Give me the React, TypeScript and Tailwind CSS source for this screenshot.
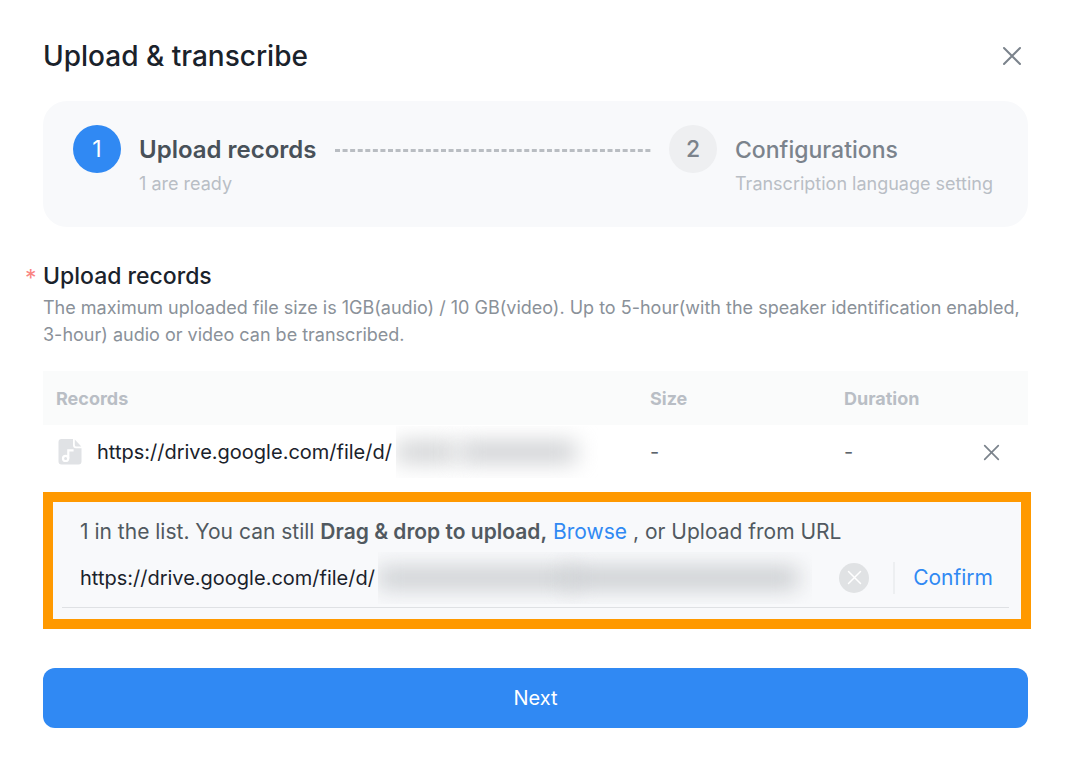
import React, { useState } from 'react';

interface CrossIconProps {
  className: string;
  strokeWidth: number;
}

const CrossIcon: React.FC<CrossIconProps> = ({ className, strokeWidth }) => (
  <svg
    viewBox="0 0 20 20"
    fill="none"
    stroke="currentColor"
    strokeWidth={strokeWidth}
    strokeLinecap="round"
    className={className}
    aria-hidden="true"
  >
    <path d="M2 2l16 16M18 2L2 18" />
  </svg>
);

const AudioFileIcon: React.FC = () => (
  <svg viewBox="0 0 24 26" className="h-[26px] w-6 shrink-0" aria-hidden="true">
    <path
      d="M3.5 0H15V6.2A3 3 0 0 0 18 9.2H23.5V22.5A3 3 0 0 1 20.5 25.5H3.5A3 3 0 0 1 .5 22.5V3A3 3 0 0 1 3.5 0Z"
      fill="#e0e2e5"
    />
    <path d="M16.8 .6L23.3 7.4H18.3A1.5 1.5 0 0 1 16.8 5.9Z" fill="#e0e2e5" />
    <circle cx="7.6" cy="19.4" r="2.6" fill="none" stroke="white" strokeWidth="2.2" />
    <path d="M10.3 19.4V11.3H15.6" fill="none" stroke="white" strokeWidth="2.2" />
  </svg>
);

interface StepProps {
  number: number;
  title: string;
  note: string;
  active?: boolean;
}

const Step: React.FC<StepProps> = ({ number, title, note, active }) => (
  <div className="flex gap-[18px]">
    <div
      className={`flex size-12 shrink-0 items-center justify-center rounded-full text-[23px] ${
        active ? 'bg-[#3089f3] text-white' : 'bg-[#eeeff1] font-medium text-[#7b838c]'
      }`}
    >
      {number}
    </div>
    <div className="whitespace-nowrap pt-[9px]">
      <h2
        className={`leading-8 ${
          active ? 'text-[24px] font-semibold text-[#485159]' : 'text-[23px] font-medium text-[#7b838c]'
        }`}
      >
        {title}
      </h2>
      <p className="mt-[6px] text-[18px] leading-6 text-[#b9bec5]">{note}</p>
    </div>
  </div>
);

const App: React.FC = () => {
  const [url, setUrl] = useState('https://drive.google.com/file/d/');

  return (
    <main className="min-h-screen bg-white pb-[43px] pl-[43px] pr-10 pt-8 font-['Inter','Liberation_Sans',sans-serif] text-[#1a222b]">
      <header className="flex h-12 items-center justify-between">
        <h1 className="text-[28px] font-medium leading-9">Upload &amp; transcribe</h1>
        <button type="button" aria-label="Close" className="mr-[2px] p-1 text-[#7b838c]">
          <CrossIcon className="size-5" strokeWidth={2} />
        </button>
      </header>

      <section className="mt-[21px] flex h-[126px] rounded-3xl bg-[#f8f9fb] px-[30px] pt-6">
        <Step number={1} title="Upload records" note="1 are ready" active />
        <svg className="mx-[18px] mt-6 h-[3px] min-w-0 flex-1" aria-hidden="true">
          <line x1="0" y1="1.5" x2="100%" y2="1.5" stroke="#b9bdc2" strokeWidth="3" strokeDasharray="5 2.57" />
        </svg>
        <div className="w-[329px] shrink-0">
          <Step number={2} title="Configurations" note="Transcription language setting" />
        </div>
      </section>

      <section className="mt-[31px]">
        <h2 className="-ml-[18px] flex items-center gap-2 text-[23px] font-medium leading-9">
          <span className="w-[10px] pt-1 text-[23px] font-normal leading-8 text-[#f98481]">*</span>
          Upload records
        </h2>
        <p className="text-[18px] leading-[27px] text-[#8a9199]">
          The maximum uploaded file size is 1GB(audio) / 10 GB(video). Up to 5-hour(with the speaker identification enabled,{' '}
          <span className="whitespace-nowrap">3-hour)</span> audio or video can be transcribed.
        </p>
      </section>

      <table className="mt-[23px] w-full table-fixed text-left">
        <thead className="bg-[#fafbfb] text-[18px] text-[#b9bec5]">
          <tr className="h-[54px]">
            <th className="pl-[13px] font-bold">Records</th>
            <th className="w-[194px] font-bold">Size</th>
            <th className="w-[127px] font-bold">Duration</th>
            <th className="w-[57px]" aria-label="Actions" />
          </tr>
        </thead>
        <tbody>
          <tr className="h-[54px] text-[20px]">
            <td className="pl-[15px]">
              <div className="flex items-center">
                <AudioFileIcon />
                <span className="ml-[15px] whitespace-nowrap">https://drive.google.com/file/d/</span>
                <div className="ml-1 flex h-[52px] w-[204px] items-center overflow-hidden" aria-hidden="true">
                  <div className="h-5 w-[60px] bg-[#cdcfd1] blur-[11px]" />
                  <div className="ml-1 h-5 w-[116px] bg-[#cacccf] blur-[11px]" />
                </div>
              </div>
            </td>
            <td className="text-[#5c646c]">-</td>
            <td className="text-[#5c646c]">-</td>
            <td>
              <button type="button" aria-label="Remove record" className="flex p-3 text-[#7b838c]">
                <CrossIcon className="size-[17px]" strokeWidth={2} />
              </button>
            </td>
          </tr>
        </tbody>
      </table>

      <section className="-mr-[3px] mt-[13px] border-[10px] border-[#ff9900] bg-[#f8f9fb] pb-[11px] pl-[9px] pr-3 pt-[14px]">
        <p className="pl-[18px] text-[21px] leading-8 text-[#515960]">
          1 in the list. You can still <strong className="font-semibold">Drag &amp; drop to upload,</strong>{' '}
          <a href="#browse" className="text-[#3089f3]">
            Browse
          </a>{' '}
          , or Upload from URL
        </p>
        <div className="flex h-[60px] items-center border-b border-[#dfe1e4] pl-[18px] text-[20px]">
          <input
            type="text"
            aria-label="File URL"
            value={url}
            onChange={(e) => setUrl(e.target.value)}
            className="w-[298px] bg-transparent leading-8 outline-none"
          />
          <div className="flex h-[52px] w-[434px] items-center overflow-hidden" aria-hidden="true">
            <div className="h-5 w-[200px] bg-[#c8cbce] blur-[11px]" />
            <div className="-ml-3 h-5 w-[232px] bg-[#c5c8cb] blur-[11px]" />
          </div>
          <button
            type="button"
            aria-label="Clear URL"
            onClick={() => setUrl('')}
            className="ml-auto flex size-[30px] shrink-0 items-center justify-center rounded-full bg-[#e0e2e4] text-white"
          >
            <CrossIcon className="size-[15px]" strokeWidth={2} />
          </button>
          <div className="ml-6 h-8 w-[2px] bg-[#edeff1]" />
          <button type="button" className="ml-[18px] mr-4 text-[21px] leading-8 text-[#3089f3]">
            Confirm
          </button>
        </div>
      </section>

      <button type="button" className="mt-[39px] h-[60px] w-full rounded-xl bg-[#3089f3] text-[20px] text-white">
        Next
      </button>
    </main>
  );
};

export default App;
